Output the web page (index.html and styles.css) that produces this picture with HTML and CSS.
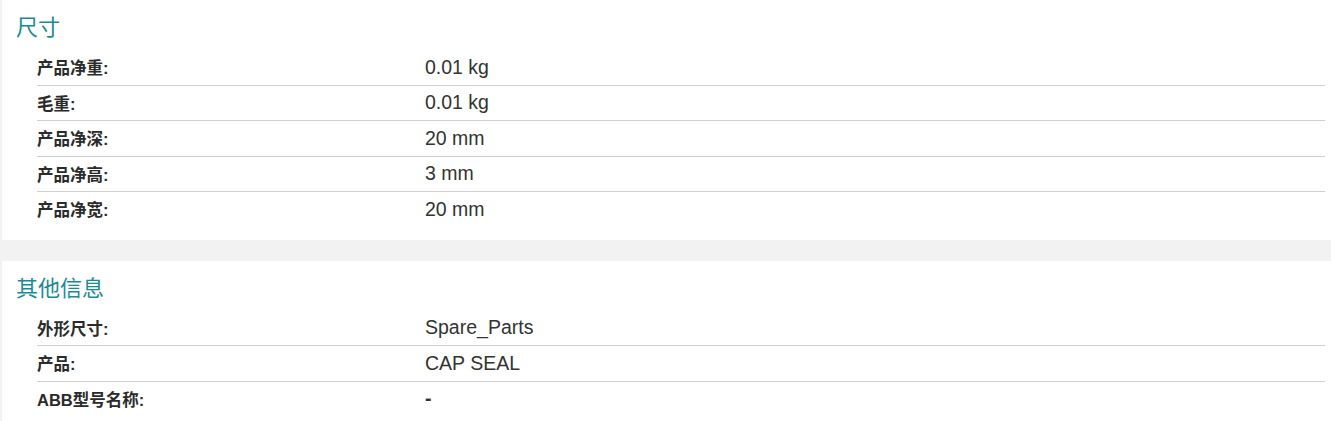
FILE: index.html
```html
<!DOCTYPE html>
<html lang="zh">
<head>
<meta charset="utf-8">
<link rel="stylesheet" href="styles.css">
</head>
<body>
<div class="page">
  <section class="card">
    <h2 class="card-title">尺寸</h2>
    <div class="rows">
      <div class="row"><div class="label">产品净重:</div><div class="value">0.01 kg</div></div>
      <div class="row"><div class="label">毛重:</div><div class="value">0.01 kg</div></div>
      <div class="row"><div class="label">产品净深:</div><div class="value">20 mm</div></div>
      <div class="row"><div class="label">产品净高:</div><div class="value">3 mm</div></div>
      <div class="row"><div class="label">产品净宽:</div><div class="value">20 mm</div></div>
    </div>
  </section>
  <section class="card">
    <h2 class="card-title">其他信息</h2>
    <div class="rows">
      <div class="row"><div class="label">外形尺寸:</div><div class="value">Spare_Parts</div></div>
      <div class="row"><div class="label">产品:</div><div class="value">CAP SEAL</div></div>
      <div class="row"><div class="label">ABB型号名称:</div><div class="value value-strong">-</div></div>
    </div>
  </section>
</div>
</body>
</html>
```
FILE: styles.css
```css
html, body {
  margin: 0;
  padding: 0;
  background: #f2f2f2;
}
body {
  font-family: "Liberation Sans", "Noto Sans CJK SC", sans-serif;
  color: #333;
}
.page {
  display: flex;
  flex-direction: column;
  gap: 21px;
  padding-left: 2px;
}
.card {
  background: #fff;
  padding: 10px 6px 13px 0;
}
.card-title {
  margin: 0 0 10px 14px;
  font-size: 22px;
  line-height: 30px;
  font-weight: normal;
  color: #1c8a96;
  font-family: "Noto Sans CJK SC", "Liberation Sans", sans-serif;
}
.rows {
  margin-left: 35px;
}
.row {
  display: flex;
  align-items: center;
  height: 34.5px;
  border-bottom: 1px solid #cfcfcf;
}
.row:last-child {
  border-bottom: none;
}
.label {
  width: 388px;
  flex: none;
  font-size: 16.5px;
  font-weight: bold;
  color: #2b2b2b;
  font-family: "Liberation Sans", "Noto Sans CJK SC", sans-serif;
}
.value {
  font-size: 19.5px;
  color: #333;
}
.value-strong {
  font-weight: bold;
}
```
